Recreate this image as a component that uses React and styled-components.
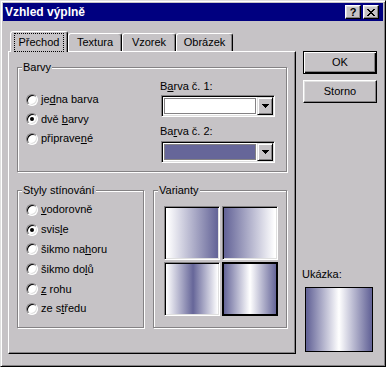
import React from "react";
import styled, { createGlobalStyle } from "styled-components";

const FACE = "#c6c3c6";
const SHADOW = "#848284";
const LIGHT = "#dfdfdf";
const BLUE = "#666699";

const GlobalStyle = createGlobalStyle`
  html, body { margin: 0; padding: 0; background: ${FACE}; }
  body {
    font-family: "Liberation Sans", Arial, sans-serif;
    font-size: 11px;
    color: #000;
  }
  * { box-sizing: border-box; }
  u { text-underline-offset: 1px; }
`;

const Window = styled.div`
  width: 386px;
  height: 367px;
  display: flex;
  flex-direction: column;
  background: ${FACE};
  border: 1px solid;
  border-color: ${LIGHT} #000 #000 ${LIGHT};
  box-shadow: inset 1px 1px 0 #fff, inset -1px -1px 0 ${SHADOW};
  padding: 2px;
`;

const TitleBar = styled.div`
  height: 18px;
  background: #000080;
  display: flex;
  align-items: center;
  padding: 0 4px 0 2px;
`;

const Title = styled.div`
  flex: 1;
  color: #fff;
  font-weight: bold;
  font-size: 12px;
  line-height: 14px;
`;

const TitleButton = styled.div`
  width: 16px;
  height: 14px;
  margin-left: ${(p) => p.$gap || 0}px;
  background: ${FACE};
  border: 1px solid;
  border-color: #fff #000 #000 #fff;
  box-shadow: inset -1px -1px 0 ${SHADOW}, inset 1px 1px 0 ${LIGHT};
  display: flex;
  align-items: center;
  justify-content: center;
  font-weight: bold;
  font-size: 11px;
  line-height: 11px;
`;

const Body = styled.div`
  flex: 1;
  display: flex;
  padding: 10px 5px 10px 5px;
  gap: 6px;
`;

const LeftCol = styled.div`
  width: 288px;
  display: flex;
  flex-direction: column;
`;

const TabStrip = styled.div`
  height: 20px;
  display: flex;
  align-items: flex-end;
  padding-left: 2px;
`;

const Tab = styled.div`
  width: ${(p) => p.$w}px;
  height: ${(p) => (p.$active ? 21 : 18)}px;
  margin-bottom: ${(p) => (p.$active ? -1 : 0)}px;
  position: relative;
  z-index: ${(p) => (p.$active ? 1 : 0)};
  background: ${FACE};
  border-left: 1px solid #fff;
  border-top: 1px solid #fff;
  border-right: 1px solid #000;
  border-radius: 3px 3px 0 0;
  box-shadow: inset -1px 0 0 ${SHADOW};
  display: flex;
  align-items: ${(p) => (p.$active ? "flex-start" : "center")};
  padding-top: ${(p) => (p.$active ? 2 : 0)}px;
  justify-content: center;
  line-height: 13px;
`;

const Focus = styled.span`
  outline: 1px dotted #000;
  outline-offset: 0;
  padding: 2px 4px 2px 4px;
`;

const Panel = styled.div`
  flex: 1;
  border: 1px solid;
  border-color: #fff #000 #000 #fff;
  box-shadow: inset -1px -1px 0 ${SHADOW};
  padding: 15px 0 0 8px;
`;

const Group = styled.div`
  width: ${(p) => p.$w}px;
  height: ${(p) => p.$h}px;
  border: 1px solid ${SHADOW};
  box-shadow: inset 1px 1px 0 #fff, 1px 1px 0 #fff;
`;

const Legend = styled.div`
  width: fit-content;
  height: 13px;
  line-height: 13px;
  margin: -7px 0 0 4px;
  padding: 0 1px;
  background: ${FACE};
`;

const GroupRow = styled.div`
  display: flex;
  gap: 9px;
  margin-top: 18px;
`;

const BarvyBody = styled.div`
  display: flex;
  justify-content: space-between;
`;

const RadioList = styled.div`
  padding: ${(p) => p.$top}px 0 0 8px;
`;

const RadioRow = styled.div`
  height: ${(p) => p.$h}px;
  display: flex;
  align-items: center;
  gap: 3px;
  line-height: 13px;
`;

const RadioDot = styled.span`
  width: 12px;
  height: 12px;
  flex: none;
  border-radius: 50%;
  background: #fff;
  border: 1px solid;
  border-color: ${SHADOW} #fff #fff ${SHADOW};
  box-shadow: inset 1px 1px 0 #000, inset -1px -1px 0 ${LIGHT};
  display: flex;
  align-items: center;
  justify-content: center;
  &::after {
    content: "";
    width: 4px;
    height: 4px;
    border-radius: 50%;
    background: ${(p) => (p.$on ? "#000" : "transparent")};
  }
`;

const ColorCol = styled.div`
  width: 114px;
  margin-right: 11px;
  padding-top: 6px;
`;

const FieldLabel = styled.div`
  height: 13px;
  line-height: 13px;
  margin-top: ${(p) => p.$top || 0}px;
  margin-left: ${(p) => (p.$flush ? 0 : -1)}px;
`;

const Combo = styled.div`
  height: 22px;
  margin-top: ${(p) => p.$top}px;
  border: 1px solid;
  border-color: ${SHADOW} #fff #fff ${SHADOW};
  box-shadow: inset 1px 1px 0 #000, inset -1px -1px 0 ${LIGHT};
  background: #fff;
  padding: 1px;
  display: flex;
`;

const Swatch = styled.div`
  flex: 1;
  margin: 1px;
  border: 1px solid ${SHADOW};
  background: ${(p) => p.$color};
`;

const DropButton = styled.div`
  width: 16px;
  background: ${FACE};
  border: 1px solid;
  border-color: ${LIGHT} #000 #000 ${LIGHT};
  box-shadow: inset 1px 1px 0 #fff, inset -1px -1px 0 ${SHADOW};
  display: flex;
  align-items: center;
  justify-content: center;
`;

const TileGrid = styled.div`
  display: grid;
  grid-template-columns: 56px 56px;
  grid-template-rows: 54px 54px;
  gap: 2px;
  padding: 9px 0 0 10px;
`;

const Tile = styled.div`
  background: ${(p) => p.$bg};
  border: 1px solid;
  border-color: ${(p) =>
    p.$selected ? "#000" : `${SHADOW} #fff #fff ${SHADOW}`};
  box-shadow: ${(p) =>
    p.$selected
      ? "inset 1px 1px 0 #000, inset -1px -1px 0 #000"
      : `inset 1px 1px 0 #000, inset -1px -1px 0 ${LIGHT}`};
`;

const RightCol = styled.div`
  width: 76px;
  display: flex;
  flex-direction: column;
  padding-top: 20px;
`;

const PushButton = styled.div`
  width: 74px;
  height: 23px;
  margin: ${(p) => p.$top || 0}px 0 0 1px;
  border: 1px solid;
  border-color: ${(p) => (p.$default ? "#000" : "#fff #000 #000 #fff")};
  box-shadow: ${(p) =>
    p.$default
      ? `inset 1px 1px 0 #fff, inset -1px -1px 0 #000, inset -2px -2px 0 ${SHADOW}`
      : `inset -1px -1px 0 ${SHADOW}, inset 1px 1px 0 ${LIGHT}`};
  display: flex;
  align-items: center;
  justify-content: center;
  line-height: 13px;
`;

const PreviewBlock = styled.div`
  margin-top: auto;
`;

const Preview = styled.div`
  width: 68px;
  height: 65px;
  margin: 6px 0 2px 3px;
  border: 1px solid #000;
  background: ${(p) => p.$bg};
`;

const grad = {
  right: `linear-gradient(to right, #fff 4%, ${BLUE} 96%)`,
  left: `linear-gradient(to right, ${BLUE} 4%, #fff 96%)`,
  mid: `linear-gradient(to right, #fff 2%, ${BLUE} 52%, #fff 98%)`,
  edge: `linear-gradient(to right, ${BLUE} 2%, #fff 50%, ${BLUE} 98%)`,
};

const CloseGlyph = () => {
  const rows = ["11000011", "01100110", "00111100", "00011000", "00111100", "01100110", "11000011"];
  return (
    <svg width="8" height="7" shapeRendering="crispEdges">
      {rows.map((r, y) =>
        r.split("").map((c, x) => (c === "1" ? <rect key={`${x}-${y}`} x={x} y={y} width="1" height="1" fill="#000" /> : null))
      )}
    </svg>
  );
};

const Arrow = () => (
  <svg width="7" height="4" shapeRendering="crispEdges">
    <rect x="0" y="0" width="7" height="1" fill="#000" />
    <rect x="1" y="1" width="5" height="1" fill="#000" />
    <rect x="2" y="2" width="3" height="1" fill="#000" />
    <rect x="3" y="3" width="1" height="1" fill="#000" />
  </svg>
);

const Radio = ({ on, h, children }) => (
  <RadioRow $h={h}>
    <RadioDot $on={on} />
    <span>{children}</span>
  </RadioRow>
);

export default function App() {
  return (
    <>
      <GlobalStyle />
      <Window>
        <TitleBar>
          <Title>Vzhled výplně</Title>
          <TitleButton>?</TitleButton>
          <TitleButton $gap={2}>
            <CloseGlyph />
          </TitleButton>
        </TitleBar>
        <Body>
          <LeftCol>
            <TabStrip>
              <Tab $w={58} $active>
                <Focus>Přechod</Focus>
              </Tab>
              <Tab $w={54}>Textura</Tab>
              <Tab $w={54}>Vzorek</Tab>
              <Tab $w={57}>Obrázek</Tab>
            </TabStrip>
            <Panel>
              <Group $w={270} $h={105}>
                <Legend>Barvy</Legend>
                <BarvyBody>
                  <RadioList $top={16}>
                    <Radio h={19.5}>
                      je<u>d</u>na barva
                    </Radio>
                    <Radio h={19.5} on>
                      dvě <u>b</u>arvy
                    </Radio>
                    <Radio h={19.5}>
                      připrave<u>n</u>é
                    </Radio>
                  </RadioList>
                  <ColorCol>
                    <FieldLabel>
                      B<u>a</u>rva č. 1:
                    </FieldLabel>
                    <Combo $top={2}>
                      <Swatch $color="#fff" />
                      <DropButton>
                        <Arrow />
                      </DropButton>
                    </Combo>
                    <FieldLabel $top={8}>
                      Ba<u>r</u>va č. 2:
                    </FieldLabel>
                    <Combo $top={3}>
                      <Swatch $color={BLUE} />
                      <DropButton>
                        <Arrow />
                      </DropButton>
                    </Combo>
                  </ColorCol>
                </BarvyBody>
              </Group>
              <GroupRow>
                <Group $w={127} $h={138}>
                  <Legend>Styly stínování</Legend>
                  <RadioList $top={3}>
                    <Radio h={19.8}>
                      <u>v</u>odorovně
                    </Radio>
                    <Radio h={19.8} on>
                      svis<u>l</u>e
                    </Radio>
                    <Radio h={19.8}>
                      šikmo na<u>h</u>oru
                    </Radio>
                    <Radio h={19.8}>
                      šikmo do<u>l</u>ů
                    </Radio>
                    <Radio h={19.8}>
                      <u>z</u> rohu
                    </Radio>
                    <Radio h={19.8}>
                      ze s<u>t</u>ředu
                    </Radio>
                  </RadioList>
                </Group>
                <Group $w={134} $h={138}>
                  <Legend>Varianty</Legend>
                  <TileGrid>
                    <Tile $bg={grad.right} />
                    <Tile $bg={grad.left} />
                    <Tile $bg={grad.mid} />
                    <Tile $bg={grad.edge} $selected />
                  </TileGrid>
                </Group>
              </GroupRow>
            </Panel>
          </LeftCol>
          <RightCol>
            <PushButton $default>OK</PushButton>
            <PushButton $top={6}>Storno</PushButton>
            <PreviewBlock>
              <FieldLabel $flush>Ukázka:</FieldLabel>
              <Preview $bg={grad.edge} />
            </PreviewBlock>
          </RightCol>
        </Body>
      </Window>
    </>
  );
}
